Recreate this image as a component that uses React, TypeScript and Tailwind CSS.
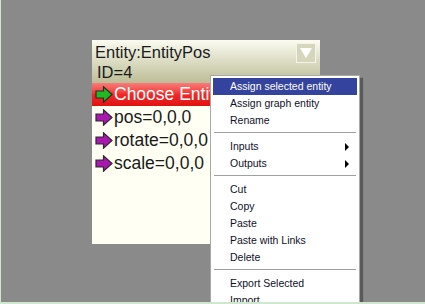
const Arrow = ({ fill }: { fill: string }) => (
  <svg width="18" height="17" viewBox="0 0 18 17" className="shrink-0">
    <path d="M1 5 H8.5 V0.8 L17 8.5 L8.5 16.2 V12 H1 Z" fill={fill} stroke="#2a2a2a" strokeWidth="1.2" strokeLinejoin="miter" />
  </svg>
)

const SubArrow = () => (
  <svg width="5" height="8" viewBox="0 0 5 8">
    <path d="M0 0 L4 4 L0 8 Z" fill="#000" />
  </svg>
)

const menu: (string | null | { label: string; sub?: boolean; active?: boolean })[] = [
  { label: 'Assign selected entity', active: true },
  { label: 'Assign graph entity' },
  { label: 'Rename' },
  null,
  { label: 'Inputs', sub: true },
  { label: 'Outputs', sub: true },
  null,
  { label: 'Cut' },
  { label: 'Copy' },
  { label: 'Paste' },
  { label: 'Paste with Links' },
  { label: 'Delete' },
  null,
  { label: 'Export Selected' },
  { label: 'Import' },
]

const rows = ['pos=0,0,0', 'rotate=0,0,0', 'scale=0,0,0']

const App = () => {
  return (
    <div className="relative w-[425px] h-[304px] overflow-hidden bg-[#8a8a8a] border-l border-b-2 border-[#cfe6cf]">
      {/* graph node */}
      <div
        className="absolute left-[91px] top-[40px] w-[228px] h-[204px] bg-[#fffff4] flex flex-col text-[#1a1a1a]"
        style={{ fontFamily: '"Liberation Sans", Arial, sans-serif' }}
      >
        <div className="relative h-[43px] bg-gradient-to-b from-[#fbfbf1] to-[#bdbd97] px-[3px] pt-[2px] text-[16.5px] leading-[20px]">
          <div>Entity:EntityPos</div>
          <div className="pl-[2px]">ID=4</div>
          <div className="absolute right-[4px] top-[3px] w-[20px] h-[20px] border border-[#f4f4ea] bg-[#d6d6bc] flex items-center justify-center">
            <svg width="12" height="10" viewBox="0 0 12 10">
              <path d="M0 0 H12 L6 10 Z" fill="#fff" />
            </svg>
          </div>
        </div>
        <div className="h-[23px] bg-gradient-to-b from-[#f87a7a] via-[#f02828] to-[#e01010] flex items-center gap-[1px] pl-[3px] text-white text-[17.5px] overflow-hidden whitespace-nowrap">
          <Arrow fill="#22b822" />
          <span>Choose Entity</span>
        </div>
        {rows.map((r) => (
          <div key={r} className="h-[23px] flex items-center gap-[1px] pl-[3px] text-[17.5px] whitespace-nowrap">
            <Arrow fill="#a818b0" />
            <span>{r}</span>
          </div>
        ))}
      </div>

      {/* context menu */}
      <div
        className="absolute left-[209px] top-[75px] w-[150px] bg-white border border-[#a8a8a8] p-[2px] text-[10.5px] text-[#10102a] shadow-[3px_3px_1px_rgba(0,0,0,0.35)]"
        style={{ fontFamily: '"Liberation Sans", Tahoma, sans-serif' }}
      >
        {menu.map((m, i) =>
          m === null ? (
            <div key={i} className="h-[9px] pt-[3px] px-[1px]">
              <div className="border-t border-[#a0a0a0] border-b border-b-white" />
            </div>
          ) : typeof m === 'object' ? (
            <div
              key={i}
              className={`h-[17px] flex items-center justify-between pl-[17px] pr-[7px] ${m.active ? 'bg-[#34449e] text-white' : ''}`}
            >
              <span>{m.label}</span>
              {m.sub && <SubArrow />}
            </div>
          ) : null
        )}
      </div>
    </div>
  )
}

export default App
